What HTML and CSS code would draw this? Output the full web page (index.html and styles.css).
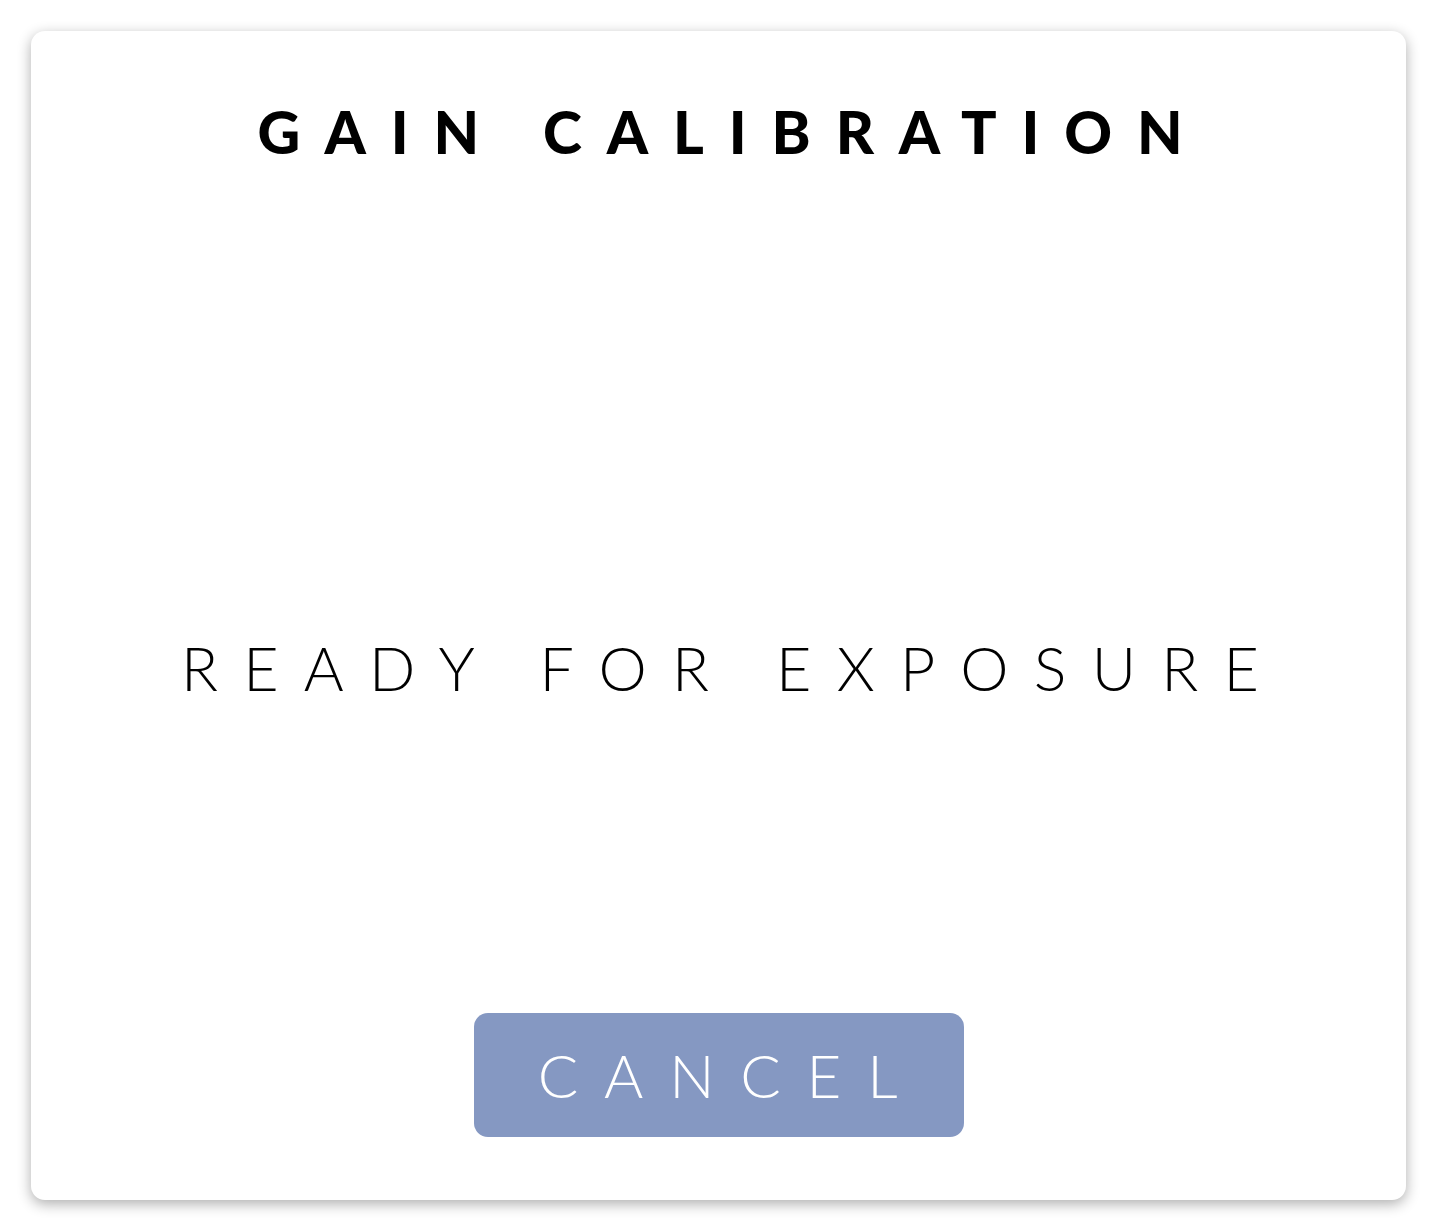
FILE: index.html
```html
<!DOCTYPE html>
<html>
<head>
<meta charset="utf-8">
<link rel="stylesheet" href="styles.css">
</head>
<body>
<div class="card">
  <h1 class="title">GAIN CALIBRATION</h1>
  <div class="status">READY FOR EXPOSURE</div>
  <div class="actions">
    <button class="cancel">CANCEL</button>
  </div>
</div>
</body>
</html>
```

FILE: styles.css
```css
html, body {
  margin: 0;
  padding: 0;
  background: #ffffff;
}
body {
  padding: 31px 32px 32px 31px;
  font-family: Lato, "Liberation Sans", sans-serif;
}
.card {
  width: 1375px;
  height: 1169px;
  box-sizing: border-box;
  background: #ffffff;
  border-radius: 14px;
  box-shadow: 0 4px 14px rgba(0, 0, 0, 0.32);
  display: flex;
  flex-direction: column;
  align-items: center;
  padding: 0 0 63px 0;
}
.title {
  margin: 0;
  margin-top: 66px;
  font-size: 59px;
  font-weight: 900;
  line-height: 70px;
  letter-spacing: 24.9px;
  padding-left: 28px;
  color: #000;
}
.status {
  flex: 1;
  display: flex;
  align-items: center;
  padding-top: 154px;
  font-size: 61px;
  font-weight: 300;
  letter-spacing: 25.2px;
  padding-left: 28px;
  color: #000;
}
.actions {
  display: flex;
  justify-content: center;
}
.cancel {
  width: 490px;
  height: 124px;
  border: none;
  border-radius: 14px;
  background: #8598c2;
  color: #ffffff;
  font-family: Lato, "Liberation Sans", sans-serif;
  font-size: 60px;
  font-weight: 300;
  letter-spacing: 25.8px;
  padding: 0 0 0 24px;
}
```
